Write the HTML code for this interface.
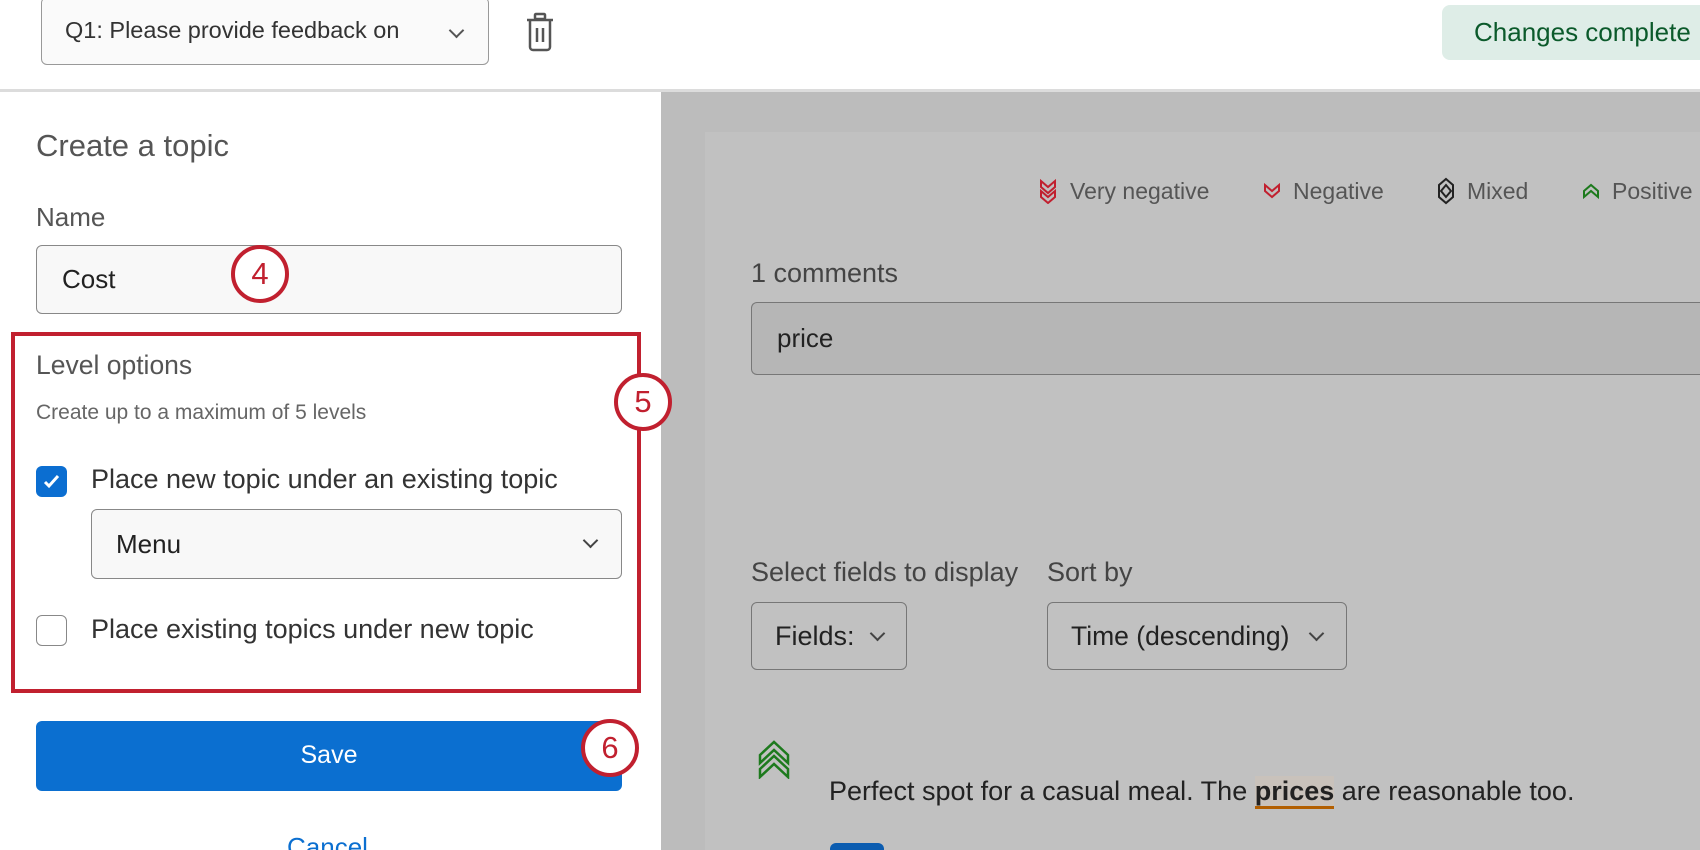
<!DOCTYPE html>
<html><head><meta charset="utf-8"><style>
*{box-sizing:border-box;margin:0;padding:0}
html,body{width:1700px;height:850px;overflow:hidden;background:#bcbcbc}
body{font-family:"Liberation Sans",sans-serif;position:relative}
.a{position:absolute;white-space:nowrap}
.top{left:0;top:0;width:1700px;height:92px;background:#fff;border-bottom:3px solid #dcdcdc}
.panel{left:0;top:92px;width:661px;height:758px;background:#fff}
.card{left:705px;top:132px;width:995px;height:718px;background:#c1c1c1}
.circ{position:absolute;width:58px;height:58px;border:4px solid #c1202f;border-radius:50%;background:#fff;color:#c1202f;font-size:31px;text-align:center;line-height:50px}
.chev{position:absolute;width:11px;height:11px;border-right:2px solid #444;border-bottom:2px solid #444;transform:rotate(45deg)}
</style></head><body>
<div class="a top"></div>
<div class="a" style="left:41px;top:-3px;width:448px;height:68px;border:1.5px solid #999;border-radius:6px;background:#fafafa;"></div>
<div class="a" style="left:65px;top:17px;font-size:23.5px;color:#333;width:370px;overflow:hidden">Q1: Please provide feedback on</div>
<div class="chev" style="left:451px;top:25px;border-color:#555"></div>
<svg class="a" style="left:524px;top:12px" width="32" height="40" viewBox="0 0 32 40" fill="none" stroke="#555" stroke-width="2.5"><rect x="11" y="2" width="10" height="5" rx="1"/><path d="M3 8h26"/><path d="M6 9v26a3 3 0 0 0 3 3h14a3 3 0 0 0 3-3V9"/><path d="M13 16v14M19 16v14"/></svg>
<div class="a" style="left:1442px;top:5px;width:258px;height:55px;background:#deede7;border-radius:8px 0 0 8px"></div>
<div class="a" style="left:1474px;top:17px;font-size:26px;color:#0b5a2b">Changes complete</div>

<div class="a panel"></div>
<div class="a card"></div>

<div class="a" style="left:36px;top:128px;font-size:31px;color:#555">Create a topic</div>
<div class="a" style="left:36px;top:202px;font-size:26px;color:#555">Name</div>
<div class="a" style="left:36px;top:245px;width:586px;height:69px;border:1.5px solid #888;border-radius:6px;background:#f8f8f8"></div>
<div class="a" style="left:62px;top:264px;font-size:26px;color:#222">Cost</div>
<div class="circ" style="left:231px;top:245px">4</div>

<div class="a" style="left:11px;top:332px;width:630px;height:361px;border:4px solid #c1202f"></div>
<div class="a" style="left:36px;top:350px;font-size:26.5px;color:#555">Level options</div>
<div class="a" style="left:36px;top:401px;font-size:21px;color:#666">Create up to a maximum of 5 levels</div>
<div class="circ" style="left:614px;top:373px">5</div>
<div class="a" style="left:36px;top:466px;width:31px;height:31px;border-radius:6px;background:#0b6ed1"></div>
<svg class="a" style="left:36px;top:466px" width="31" height="31"><path d="M9 16l4 4 9-10" fill="none" stroke="#fff" stroke-width="3"/></svg>
<div class="a" style="left:91px;top:464px;font-size:27px;color:#333">Place new topic under an existing topic</div>
<div class="a" style="left:91px;top:509px;width:531px;height:70px;border:1.5px solid #888;border-radius:6px;background:#f8f8f8"></div>
<div class="a" style="left:116px;top:529px;font-size:26px;color:#222">Menu</div>
<div class="chev" style="left:585px;top:535px"></div>
<div class="a" style="left:36px;top:615px;width:31px;height:31px;border-radius:6px;border:1.5px solid #888;background:#fff"></div>
<div class="a" style="left:91px;top:614px;font-size:27px;color:#333">Place existing topics under new topic</div>

<div class="a" style="left:36px;top:721px;width:586px;height:70px;border-radius:6px;background:#0b6fd0"></div>
<div class="a" style="left:36px;top:741px;width:586px;text-align:center;font-size:25px;color:#fff">Save</div>
<div class="circ" style="left:581px;top:719px">6</div>
<div class="a" style="left:280px;top:820px;width:110px;height:30px;overflow:hidden"><div style="position:absolute;left:7px;top:12px;font-size:26px;color:#0b6fd0;white-space:nowrap">Cancel</div></div>

<svg class="a" style="left:1038px;top:178px" width="20" height="26" viewBox="0 0 20 26" fill="none" stroke="#c1202f" stroke-width="2"><path d="M3 3l7 6 7-6v6l-7 6-7-6zM3 13l7 6 7-6v6l-7 6-7-6z"/></svg>
<div class="a" style="left:1070px;top:178px;font-size:23px;color:#555">Very negative</div>
<svg class="a" style="left:1262px;top:182px" width="20" height="18" viewBox="0 0 20 18" fill="none" stroke="#c1202f" stroke-width="2"><path d="M3 3l7 6 7-6v6l-7 6-7-6z"/></svg>
<div class="a" style="left:1293px;top:178px;font-size:23px;color:#555">Negative</div>
<svg class="a" style="left:1436px;top:177px" width="20" height="28" viewBox="0 0 20 28" fill="none" stroke="#222" stroke-width="2"><path d="M10 2l7 6v12l-7 6-7-6V8z"/><path d="M10 8l5 6-5 6-5-6z"/></svg>
<div class="a" style="left:1467px;top:178px;font-size:23px;color:#555">Mixed</div>
<svg class="a" style="left:1581px;top:182px" width="20" height="18" viewBox="0 0 20 18" fill="none" stroke="#1d7a1d" stroke-width="2"><path d="M3 15l7-6 7 6V9l-7-6-7 6z"/></svg>
<div class="a" style="left:1612px;top:178px;font-size:23px;color:#555">Positive</div>

<div class="a" style="left:751px;top:258px;font-size:27px;color:#444">1 comments</div>
<div class="a" style="left:751px;top:302px;width:949px;height:73px;border:1.5px solid #777;border-right:none;border-radius:6px 0 0 6px;background:#b6b6b6"></div>
<div class="a" style="left:777px;top:323px;font-size:26px;color:#222">price</div>

<div class="a" style="left:751px;top:557px;font-size:27px;color:#444">Select fields to display</div>
<div class="a" style="left:1047px;top:557px;font-size:27px;color:#444">Sort by</div>
<div class="a" style="left:751px;top:602px;width:156px;height:68px;border:1.5px solid #777;border-radius:6px"></div>
<div class="a" style="left:775px;top:621px;font-size:27px;color:#222">Fields:</div>
<div class="chev" style="left:872px;top:628px"></div>
<div class="a" style="left:1047px;top:602px;width:300px;height:68px;border:1.5px solid #777;border-radius:6px"></div>
<div class="a" style="left:1071px;top:621px;font-size:26.5px;color:#222">Time (descending)</div>
<div class="chev" style="left:1311px;top:628px"></div>

<svg class="a" style="left:757px;top:739px" width="34" height="40" viewBox="0 0 34 40" fill="none" stroke="#1d7a1d" stroke-width="2.5"><path d="M3 16L17 3l14 13v8L17 11 3 24z"/><path d="M3 30l14-13 14 13v8L17 25 3 38z"/></svg>
<div class="a" style="left:829px;top:776px;font-size:27px;color:#222">Perfect spot for a casual meal. The <b style="background:#c9c2bb;border-bottom:3px solid #b35f00">prices</b> are reasonable too.</div>
<div class="a" style="left:830px;top:843px;width:54px;height:7px;border-radius:6px 6px 0 0;background:#0b5cb0"></div>
</body></html>
